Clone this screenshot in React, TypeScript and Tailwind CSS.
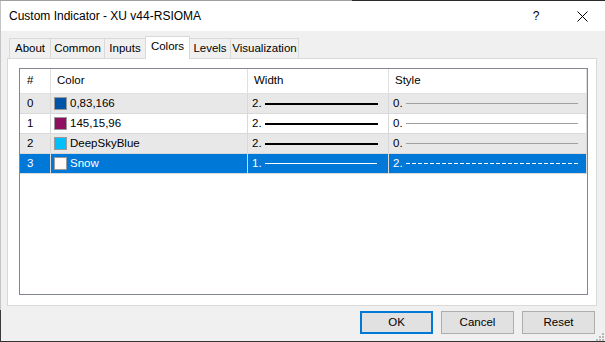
import React from "react";

const font = { fontFamily: '"Liberation Sans", Arial, sans-serif' };

type Row = { n: string; swatch: string; name: string; w: string; s: string; thick: boolean };

const rows: Row[] = [
  { n: "0", swatch: "#0053a6", name: "0,83,166", w: "2.", s: "0.", thick: true },
  { n: "1", swatch: "#910f60", name: "145,15,96", w: "2.", s: "0.", thick: true },
  { n: "2", swatch: "#00bfff", name: "DeepSkyBlue", w: "2.", s: "0.", thick: true },
  { n: "3", swatch: "#fffafa", name: "Snow", w: "1.", s: "2.", thick: false },
];

function Tab({ label, w, cls }: { label: string; w: string; cls: string }) {
  return (
    <div className={`${w} ${cls} h-[20px] border-t border-[#d9d9d9] flex items-center justify-center text-black`}>
      {label}
    </div>
  );
}

export default function App() {
  return (
    <div
      className="w-[605px] h-[342px] flex flex-col bg-[#f0f0f0] overflow-hidden text-[11.5px] leading-none text-black"
      style={font}
    >
      {/* top edge */}
      <div className="flex h-px shrink-0">
        <div className="w-[352px] bg-[#a0a0a0]" />
        <div className="flex-1 bg-[#2b2b2b]" />
      </div>
      <div className="flex flex-1 min-h-0">
        {/* left edge */}
        <div className="w-px shrink-0 flex flex-col">
          <div className="h-[309px] bg-[#c4c4c4]" />
          <div className="flex-1 bg-[#3a3a3a]" />
        </div>
        <div className="flex-1 flex flex-col relative">
          {/* title bar */}
          <div className="h-[30px] shrink-0 bg-white flex items-center">
            <div className="pl-[8px] text-[12px] text-black">Custom Indicator - XU v44-RSIOMA</div>
            <div className="flex-1" />
            <div className="w-[46px] h-full flex items-center justify-center text-[12px]">?</div>
            <div className="w-[46px] h-full flex items-center justify-center">
              <svg width="11" height="11" viewBox="0 0 11 11">
                <path d="M0.5 0.5 L10.5 10.5 M10.5 0.5 L0.5 10.5" stroke="#000" strokeWidth="1" fill="none" />
              </svg>
            </div>
          </div>

          {/* body */}
          <div className="flex-1 flex flex-col pl-[6px] pr-[8px] pt-[5px]">
            {/* tabs */}
            <div className="h-[22px] shrink-0 flex items-end pl-[2px]">
              <Tab label="About" w="w-[41px]" cls="border-l" />
              <Tab label="Common" w="w-[54px]" cls="border-l" />
              <Tab label="Inputs" w="w-[41px]" cls="border-l" />
              <div className="w-[45px] h-[23px] -mb-px relative z-10 bg-white border-l border-t border-r border-[#d9d9d9] flex items-center justify-center pb-[3px]">
                Colors
              </div>
              <Tab label="Levels" w="w-[40px]" cls="" />
              <Tab label="Visualization" w="w-[69px]" cls="border-l border-r" />
            </div>

            {/* panel */}
            <div className="h-[248px] w-[590px] shrink-0 bg-white border border-[#d9d9d9] pl-[11px] pr-[8px] pt-[9px] pb-[10px]">
              <div className="w-[569px] h-[227px] border border-[#828790] bg-white">
                <div className="grid grid-cols-[31px_197px_141px_198px]">
                  {/* header */}
                  <div className="h-[25px] border-r border-b border-[#e0e0e0] pl-[7px] flex items-center">#</div>
                  <div className="h-[25px] border-r border-b border-[#e0e0e0] pl-[6px] flex items-center">Color</div>
                  <div className="h-[25px] border-r border-b border-[#e0e0e0] pl-[6px] flex items-center">Width</div>
                  <div className="h-[25px] border-r border-b border-[#e0e0e0] pl-[6px] flex items-center">Style</div>
                  {rows.map((r, i) => {
                    const sel = i === 3;
                    const bg = sel ? "bg-[#0078d7] text-white" : i % 2 === 0 ? "bg-[#e8e8e8]" : "bg-white";
                    const cell = `h-[20px] border-r border-b border-[#d9d9d9] flex items-center ${bg}`;
                    return (
                      <React.Fragment key={r.n}>
                        <div className={`${cell} pl-[7px]`}>{r.n}</div>
                        <div className={`${cell} pl-[3px]`}>
                          <div
                            className="w-[13px] h-[13px] border border-[#9a9a9a] shrink-0"
                            style={{ backgroundColor: r.swatch }}
                          />
                          <span className="ml-[3px]">{r.name}</span>
                        </div>
                        <div className={`${cell} pl-[4px]`}>
                          <span className="w-[13px] shrink-0">{r.w}</span>
                          {r.thick ? (
                            <div className="w-[113px] h-[2px] bg-black" />
                          ) : (
                            <div className="w-[112px] h-px bg-white" />
                          )}
                        </div>
                        <div className={`${cell} pl-[4px]`}>
                          <span className="w-[13px] shrink-0">{r.s}</span>
                          {sel ? (
                            <svg width="172" height="1" className="block">
                              <line x1="0" y1="0.5" x2="172" y2="0.5" stroke="#fff" strokeWidth="1" strokeDasharray="4 2" />
                            </svg>
                          ) : (
                            <div className="w-[172px] h-px bg-[#a0a0a0]" />
                          )}
                        </div>
                      </React.Fragment>
                    );
                  })}
                </div>
              </div>
            </div>

            {/* buttons */}
            <div className="flex justify-end gap-[8px] pt-[5px] pr-[2px]">
              <div className="w-[73px] h-[23px] border-2 border-[#0078d7] bg-[#e1e1e1] flex items-center justify-center">OK</div>
              <div className="w-[73px] h-[23px] border border-[#adadad] bg-[#e1e1e1] flex items-center justify-center">Cancel</div>
              <div className="w-[73px] h-[23px] border border-[#adadad] bg-[#e1e1e1] flex items-center justify-center">Reset</div>
            </div>
          </div>

          {/* size grip */}
          <svg width="8" height="8" className="absolute right-[1px] bottom-0" viewBox="0 0 8 8">
            <rect x="6" y="0" width="2" height="2" fill="#b8b8b8" />
            <rect x="3" y="3" width="2" height="2" fill="#b8b8b8" />
            <rect x="6" y="3" width="2" height="2" fill="#b8b8b8" />
            <rect x="0" y="6" width="2" height="2" fill="#b8b8b8" />
            <rect x="3" y="6" width="2" height="2" fill="#b8b8b8" />
            <rect x="6" y="6" width="2" height="2" fill="#b8b8b8" />
          </svg>
        </div>
      </div>
      {/* bottom edge */}
      <div className="h-px shrink-0 bg-[#333]" />
    </div>
  );
}
